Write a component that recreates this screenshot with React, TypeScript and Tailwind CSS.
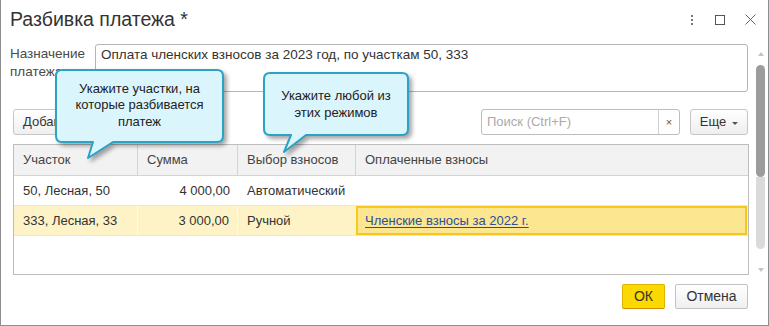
import React from 'react';

function Callout({
  left,
  top,
  width,
  height,
  path,
  lines,
  textBox,
}: {
  left: number;
  top: number;
  width: number;
  height: number;
  path: string;
  lines: string[];
  textBox: string;
}) {
  return (
    <div className="absolute" style={{ left, top, width, height }}>
      <svg width={width} height={height} className="absolute left-0 top-0 drop-shadow-[3px_3px_2px_rgba(0,0,0,0.35)]">
        <path d={path} fill="#dbf5fc" stroke="#2ba3c5" strokeWidth="2" strokeLinejoin="round" />
      </svg>
      <div className={`absolute flex flex-col items-center justify-center text-[13px] leading-[16.5px] text-[#222] ${textBox}`}>
        {lines.map((l) => (
          <span key={l}>{l}</span>
        ))}
      </div>
    </div>
  );
}

export default function App() {
  return (
    <div className="relative w-[769px] h-[326px] bg-white border-x border-b border-[#8e8e8e] overflow-hidden font-['Liberation_Sans',Arial,sans-serif] text-[#333]">
      {/* title */}
      <div className="h-[37px] flex items-center pl-[9px] pr-[12px] pt-[2px]">
        <div className="whitespace-nowrap text-[19.5px] text-[#333]">Разбивка платежа *</div>
        <div className="ml-auto flex items-center">
          <div className="flex flex-col gap-[2px] mr-[22px]">
            <span className="w-[2px] h-[2px] bg-[#777]" />
            <span className="w-[2px] h-[2px] bg-[#777]" />
            <span className="w-[2px] h-[2px] bg-[#777]" />
          </div>
          <div className="w-[10px] h-[10px] border border-[#555] mr-[20px]" />
          <svg width="11" height="11" viewBox="0 0 11 11">
            <path d="M0.5 0.5 L10.5 10.5 M10.5 0.5 L0.5 10.5" stroke="#666" strokeWidth="1" />
          </svg>
        </div>
      </div>

      <div className="flex">
        <div className="w-[748px] flex flex-col">
          {/* purpose */}
          <div className="flex mt-[7px]">
            <div className="w-[94px] pl-[9px] pt-[1px] text-[13.5px] leading-[18px] text-[#4a4a4a]">
              Назначение
              <br />
              платежа:
            </div>
            <div className="w-[653px] h-[48px] border border-[#b5b5b5] rounded-[3px] px-[5px] pt-[1px] text-[13.5px] leading-[18px] text-[#333]">
              Оплата членских взносов за 2023 год, по участкам 50, 333
            </div>
          </div>

          {/* toolbar */}
          <div className="flex items-center mt-[17px] pl-[12px] h-[26px]">
            <div className="h-[26px] w-[84px] border border-[#c6c6c6] rounded-[3px] bg-gradient-to-b from-white to-[#efefef] flex items-center pl-[9px] text-[13px] text-[#333]">
              Добавить
            </div>
            <div className="ml-auto flex items-center h-[26px] w-[199px] border border-[#bdbdbd] rounded-[3px] bg-white">
              <div className="flex-1 pl-[5px] text-[13px] text-[#aaa]">Поиск (Ctrl+F)</div>
              <div className="w-[21px] h-full border-l border-[#d0d0d0] flex items-center justify-center text-[11px] text-[#555]">×</div>
            </div>
            <div className="ml-[10px] mr-[1px] h-[26px] w-[58px] border border-[#c6c6c6] rounded-[3px] bg-gradient-to-b from-white to-[#eeeeee] flex items-center justify-center gap-[6px] text-[13px] text-[#333]">
              <span>Еще</span>
              <span className="w-0 h-0 border-x-[3px] border-x-transparent border-t-[3px] border-t-[#555] mt-[2px]" />
            </div>
          </div>

          {/* table */}
          <div className="mt-[9px] ml-[12px] w-[736px] h-[131px] border border-[#bdbdbd] text-[13px]">
            <div className="grid grid-cols-[124px_100px_118px_1fr] h-[31px] bg-[#f2f2f2] border-b border-[#d4d4d4] text-[#444]">
              <div className="flex items-center pl-[9px] border-r border-[#d4d4d4]">Участок</div>
              <div className="flex items-center pl-[9px] border-r border-[#d4d4d4]">Сумма</div>
              <div className="flex items-center pl-[9px] border-r border-[#d4d4d4]">Выбор взносов</div>
              <div className="flex items-center pl-[9px]">Оплаченные взносы</div>
            </div>
            <div className="grid grid-cols-[124px_100px_118px_1fr] h-[30px] border-b border-[#e6e6e6] text-[#333]">
              <div className="flex items-center pl-[9px]">50, Лесная, 50</div>
              <div className="flex items-center justify-end pr-[8px]">4 000,00</div>
              <div className="flex items-center pl-[9px]">Автоматический</div>
              <div />
            </div>
            <div className="grid grid-cols-[124px_100px_118px_1fr] h-[30px] bg-[#fdf3c7] border-b border-[#e6e6e6] text-[#333]">
              <div className="flex items-center pl-[9px] border-r border-[#fbfbf0]">333, Лесная, 33</div>
              <div className="flex items-center justify-end pr-[8px] border-r border-[#fbfbf0]">3 000,00</div>
              <div className="flex items-center pl-[9px]">Ручной</div>
              <div className="flex items-center pl-[7px] bg-[#fde690] border-2 border-[#f6c81e] mr-[1px]">
                <span className="text-[#2d4f9e] underline underline-offset-2">Членские взносы за 2022 г.</span>
              </div>
            </div>
          </div>
        </div>

        {/* scrollbar */}
        <div className="flex-1 flex flex-col items-center pt-[15px] pl-[4px]">
          <span className="w-0 h-0 border-x-[3px] border-x-transparent border-b-[4px] border-b-[#c4c4c4]" />
          <div className="mt-[9px] w-[9px] h-[112px] rounded-[5px] bg-[#9c9c9c]" />
          <div className="w-[9px] h-[72px] rounded-b-[5px] bg-[#dadada]" />
          <span className="mt-[19px] w-0 h-0 border-x-[3px] border-x-transparent border-t-[4px] border-t-[#c4c4c4]" />
        </div>
      </div>

      {/* footer */}
      <div className="flex justify-end gap-[10px] pr-[20px] mt-[9px]">
        <div className="w-[43px] h-[25px] bg-[#fbd800] border border-[#e0b200] border-b-[#d08a00] rounded-[2px] flex items-center justify-center text-[14px] text-[#333]">
          ОК
        </div>
        <div className="w-[73px] h-[25px] bg-gradient-to-b from-white to-[#efefef] border border-[#c3c3c3] rounded-[2px] flex items-center justify-center text-[14px] text-[#333]">
          Отмена
        </div>
      </div>

      {/* callouts */}
      <Callout
        left={49}
        top={64}
        width={185}
        height={100}
        path="M12 6 H167 Q173 6 173 12 V72 Q173 78 167 78 H63 L38 94 L43 78 H12 Q6 78 6 72 V12 Q6 6 12 6 Z"
        lines={['Укажите участки, на', 'которые разбивается', 'платеж']}
        textBox="left-[6px] top-[6px] w-[167px] h-[72px] pb-[1px]"
      />
      <Callout
        left={257}
        top={67}
        width={160}
        height={95}
        path="M12 6 H144 Q150 6 150 12 V62 Q150 68 144 68 H48 L26 85 L33 68 H12 Q6 68 6 62 V12 Q6 6 12 6 Z"
        lines={['Укажите любой из', 'этих режимов']}
        textBox="left-[6px] top-[6px] w-[144px] h-[62px] pt-[1px]"
      />
    </div>
  );
}
